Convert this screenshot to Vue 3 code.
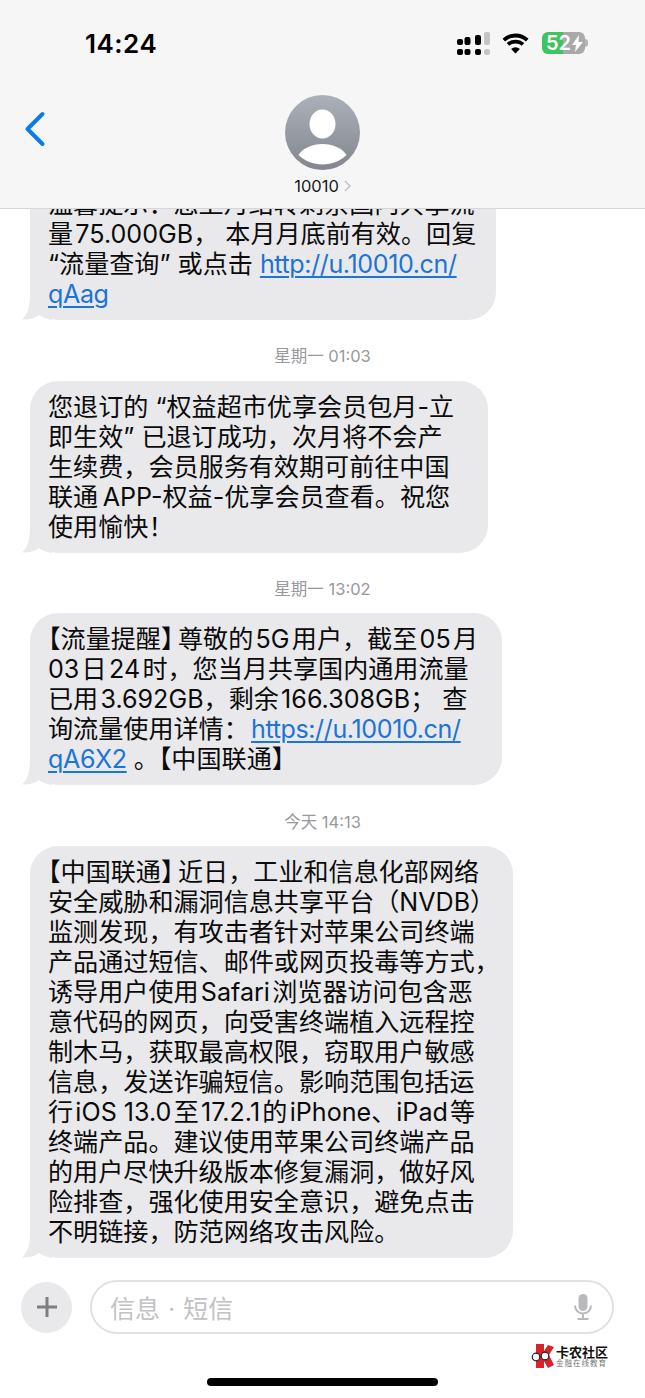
<script setup>
const H = '\u200a'
const link = (t) => ({ t, link: true })
const pull = (t) => ({ t, pull: true })
const thread = [
  {
    id: 1,
    cls: 'clipped w1',
    lines: [
      ['温馨提示：您上月结转剩余国内共享流'],
      [`量${H}75.000GB， 本月月底前有效。回复`],
      ['“流量查询” 或点击 ', link('http://u.10010.cn/')],
      [link('qAag')]
    ]
  },
  {
    id: 2,
    cls: 'w2',
    time: '星期一 01:03',
    lines: [
      ['您退订的 “权益超市优享会员包月-立'],
      ['即生效” 已退订成功，次月将不会产'],
      ['生续费，会员服务有效期可前往中国'],
      [`联通${H}${H}APP-权益-优享会员查看。祝您`],
      ['使用愉快！']
    ]
  },
  {
    id: 3,
    cls: 'w3',
    time: '星期一 13:02',
    lines: [
      ['【流量提醒】', pull(`尊敬的${H}5G${H}用户，截至${H}05${H}月`)],
      [`03${H}日${H}24${H}时，您当月共享国内通用流量`],
      [`已用${H}3.692GB，剩余${H}166.308GB； 查`],
      [`询流量使用详情：${H}`, link('https://u.10010.cn/')],
      [link('qA6X2'), ' 。【中国联通】']
    ]
  },
  {
    id: 4,
    cls: 'w4',
    time: '今天 14:13',
    lines: [
      ['【中国联通】', pull('近日，工业和信息化部网络')],
      [`安全威胁和漏洞信息共享平台（NVDB）`],
      ['监测发现，有攻击者针对苹果公司终端'],
      ['产品通过短信、邮件或网页投毒等方式，'],
      [`诱导用户使用${H}Safari${H}浏览器访问包含恶`],
      ['意代码的网页，向受害终端植入远程控'],
      ['制木马，获取最高权限，窃取用户敏感'],
      ['信息，发送诈骗短信。影响范围包括运'],
      [`行${H}iOS 13.0${H}至${H}17.2.1${H}的${H}iPhone、iPad${H}等`],
      ['终端产品。建议使用苹果公司终端产品'],
      ['的用户尽快升级版本修复漏洞，做好风'],
      ['险排查，强化使用安全意识，避免点击'],
      ['不明链接，防范网络攻击风险。']
    ]
  }
]
const parts = (line) => line.map((p) => (typeof p === 'string' ? { t: p } : p))
</script>

<template>
  <div class="phone">
    <header class="top">
      <div class="status">
        <span class="clock">14:24</span>
        <div class="status-icons">
          <svg class="signal" width="33" height="23" viewBox="0 0 33 23">
            <rect x="0" y="7" width="6" height="6" rx="2" />
            <rect x="7.500" y="5" width="6" height="8" rx="2" />
            <rect x="18" y="3" width="6" height="10" rx="2" />
            <rect x="27" y="0" width="6" height="13" rx="2" fill="#c4c4c6" />
            <rect x="0" y="17" width="6" height="6" rx="2" />
            <rect x="7.500" y="17" width="6" height="6" rx="2" />
            <rect x="18" y="17" width="6" height="6" rx="2" />
            <rect x="27" y="17" width="6" height="6" rx="2" fill="#c4c4c6" />
          </svg>
          <svg class="wifi" width="29" height="21" viewBox="0 0 29 21">
            <path d="M14.5 4.5c4 0 7.6 1.5 10.4 4l2.6-2.7A19 19 0 0 0 14.500 0.500 19 19 0 0 0 1.500 5.800l2.600 2.700c2.800-2.500 6.400-4 10.400-4z" />
            <path d="M14.500 10.500c2.400 0 4.500.9 6.200 2.300l2.600-2.700a13 13 0 0 0-17.600 0l2.600 2.700c1.700-1.400 3.800-2.300 6.200-2.300z" />
            <path d="M14.500 20.500l4.400-4.600a6.500 6.500 0 0 0-8.800 0z" />
          </svg>
          <div class="battery">
            <span class="level">52</span>
            <svg class="bolt" width="11" height="17" viewBox="0 0 11 17"><path d="M7 0 0 10h4l-1 7 8-10H6.500z" /></svg>
            <i class="nub"></i>
          </div>
        </div>
      </div>
      <div class="nav">
        <svg class="back" width="22" height="36" viewBox="0 0 22 36">
          <path d="M18.500 3 3.500 18l15 15" />
        </svg>
        <div class="contact">
          <svg class="avatar" width="75" height="75" viewBox="0 0 75 75">
            <defs>
              <linearGradient id="avatarFill" x1="0" y1="0" x2="0" y2="1">
                <stop offset="0" stop-color="#abb0ba" />
                <stop offset="1" stop-color="#83868e" />
              </linearGradient>
            </defs>
            <circle cx="37.500" cy="37.500" r="37.500" fill="url(#avatarFill)" />
            <ellipse cx="37.500" cy="29" rx="13" ry="14.500" fill="#fff" />
            <path d="M13.500 60C18 53 27 49 37.500 49s19.500 4 24 11C55 66 47 69.500 37.500 69.500S20 66 13.500 60z" fill="#fff" />
          </svg>
          <div class="name">
            <span>10010</span>
            <svg width="7" height="12" viewBox="0 0 7 12"><path d="M1 1l5 5-5 5" /></svg>
          </div>
        </div>
      </div>
    </header>

    <main class="thread">
      <template v-for="item in thread" :key="item.id">
        <div v-if="item.time" class="stamp">{{ item.time }}</div>
        <div class="bubble" :class="item.cls">
          <div v-for="(line, i) in item.lines" :key="i" class="line">
            <template v-for="(p, j) in parts(line)" :key="j">
              <a v-if="p.link" class="link">{{ p.t }}</a>
              <span v-else :class="{ pull: p.pull }">{{ p.t }}</span>
            </template>
          </div>
          <svg class="tail" width="30" height="26" viewBox="0 0 30 26">
            <path d="M8 0C8 12 6 20 0 25.500 8 26 13 24 17 21 20 23 24 25 30 26V0z" />
          </svg>
        </div>
      </template>
    </main>

    <div class="composer">
      <div class="plus">
        <svg width="20" height="20" viewBox="0 0 20 20"><path d="M10 0v20M0 10h20" /></svg>
      </div>
      <div class="field">
        <span class="placeholder">信息 · 短信</span>
        <svg class="mic" width="18" height="26" viewBox="0 0 18 26">
          <rect class="mic-head" x="4.500" y="0" width="9" height="17" rx="4.500" />
          <path class="mic-arc" d="M1 11.500c0 4.800 3.500 8 8 8s8-3.200 8-8M9 19.500V25M3.500 25h11" />
        </svg>
      </div>
    </div>

    <div class="mark">
      <svg width="24" height="24" viewBox="0 0 24 24">
        <path d="M5 0h8v7l4-6 6 2-5 8 5 10-6 3-4-7v7H5z" fill="#d8232a" />
        <circle cx="5" cy="13" r="3.800" fill="#fff" stroke="#222" stroke-width="1.200" />
        <circle cx="14" cy="12" r="3.800" fill="#fff" stroke="#222" stroke-width="1.200" />
      </svg>
      <div class="mark-text">
        <strong>卡农社区</strong>
        <small>金融在线教育</small>
      </div>
    </div>

    <div class="home"></div>
  </div>
</template>

<style scoped>
.phone {
  position: relative;
  width: 645px;
  height: 1398px;
  overflow: hidden;
  background: #fff;
  display: flex;
  flex-direction: column;
  font-family: Inter, "Noto Sans CJK SC", sans-serif;
  color: #0b0b0b;
}
.top {
  height: 209px;
  flex: none;
  box-sizing: border-box;
  background: #f6f6f7;
  border-bottom: 1px solid #d6d6d8;
  position: relative;
  z-index: 2;
}
.status {
  height: 88px;
  box-sizing: border-box;
  padding: 29px 60px 0 85px;
  display: flex;
  justify-content: space-between;
  align-items: flex-start;
}
.clock {
  font-size: 26px;
  line-height: 30px;
  font-weight: 600;
  letter-spacing: 0.500px;
  color: #000;
}
.status-icons {
  display: flex;
  align-items: flex-start;
  padding-top: 3px;
}
.signal {
  fill: #000;
}
.wifi {
  fill: #000;
  margin: 1px 12px 0 11px;
}
.battery {
  position: relative;
  width: 43px;
  height: 22px;
  border-radius: 6px;
  background: linear-gradient(to right, #3fc45f 0 49%, #a9a9ab 49% 100%);
  display: flex;
  align-items: center;
}
.level {
  color: #fff;
  font-size: 20px;
  line-height: 22px;
  font-weight: 600;
  margin-left: 4px;
}
.bolt {
  fill: #fff;
  margin-left: 1px;
}
.nub {
  position: absolute;
  right: -3px;
  top: 7px;
  width: 3px;
  height: 8px;
  border-radius: 0 3px 3px 0;
  background: #b5b5b7;
}
.nav {
  position: relative;
  display: flex;
  justify-content: center;
  padding-top: 7px;
}
.back {
  position: absolute;
  left: 24px;
  top: 23px;
  fill: none;
  stroke: #0b7bea;
  stroke-width: 4;
  stroke-linecap: round;
  stroke-linejoin: round;
}
.contact {
  display: flex;
  flex-direction: column;
  align-items: center;
}
.avatar {
  display: block;
}
.name {
  display: flex;
  align-items: center;
  gap: 5px;
  margin-top: 6px;
  font-size: 16.500px;
  line-height: 20px;
  color: #1a1a1a;
}
.name svg {
  fill: none;
  stroke: #bdbdc0;
  stroke-width: 1.300;
}
.thread {
  height: 1049px;
  flex: none;
  display: flex;
  flex-direction: column;
  align-items: flex-start;
  padding-left: 30px;
  box-sizing: border-box;
  overflow: hidden;
}
.stamp {
  align-self: stretch;
  margin-left: -30px;
  height: 60.670px;
  flex: none;
  box-sizing: border-box;
  padding-top: 10px;
  display: flex;
  align-items: center;
  justify-content: center;
  font-size: 16.500px;
  color: #98989c;
}
.bubble {
  position: relative;
  flex: none;
  box-sizing: border-box;
  background: #e9e9eb;
  border-radius: 28px;
  padding: 11px 0 11px 18px;
  font-size: 25.100px;
  line-height: 30px;
}
.clipped {
  margin-top: -31px;
}
.w1 {
  width: 466px;
}
.w2 {
  width: 458px;
}
.w3 {
  width: 472px;
}
.w4 {
  width: 483px;
}
.line {
  white-space: pre;
  position: relative;
  z-index: 1;
  text-spacing-trim: trim-start;
}
.pull {
  margin-left: -8px;
}
.link {
  color: #1b74d6;
  letter-spacing: -0.400px;
  text-decoration: underline;
  text-decoration-thickness: 1.500px;
  text-underline-offset: 3px;
}
.tail {
  position: absolute;
  left: -8px;
  bottom: 0;
  fill: #e9e9eb;
}
.composer {
  display: flex;
  align-items: center;
  gap: 18px;
  padding: 22px 31px 0 21px;
  flex: none;
}
.plus {
  width: 51px;
  height: 51px;
  border-radius: 50%;
  background: #e9e9eb;
  display: flex;
  align-items: center;
  justify-content: center;
  flex: none;
}
.plus svg {
  fill: none;
  stroke: #7d7e83;
  stroke-width: 3;
}
.field {
  flex: 1;
  height: 54px;
  box-sizing: border-box;
  border: 2px solid #e1e1e3;
  border-radius: 27px;
  display: flex;
  align-items: center;
  justify-content: space-between;
  padding: 0 20px 0 18px;
}
.placeholder {
  font-size: 25px;
  word-spacing: 1px;
  color: #c2c2c4;
}
.mic-head {
  fill: #b9b9bc;
}
.mic-arc {
  fill: none;
  stroke: #b9b9bc;
  stroke-width: 2;
}
.mark {
  display: flex;
  align-items: center;
  gap: 1px;
  align-self: flex-end;
  margin: 10px 37px 0 0;
  height: 24px;
}
.mark-text {
  display: flex;
  flex-direction: column;
  gap: 1px;
}
.mark-text strong {
  font-size: 13px;
  line-height: 14px;
  color: #111;
  font-weight: 700;
}
.mark-text small {
  font-size: 7.500px;
  line-height: 8px;
  letter-spacing: 1px;
  color: #777;
}
.home {
  align-self: center;
  width: 231px;
  height: 8px;
  border-radius: 4px;
  background: #000;
  margin-top: 10px;
}
</style>
